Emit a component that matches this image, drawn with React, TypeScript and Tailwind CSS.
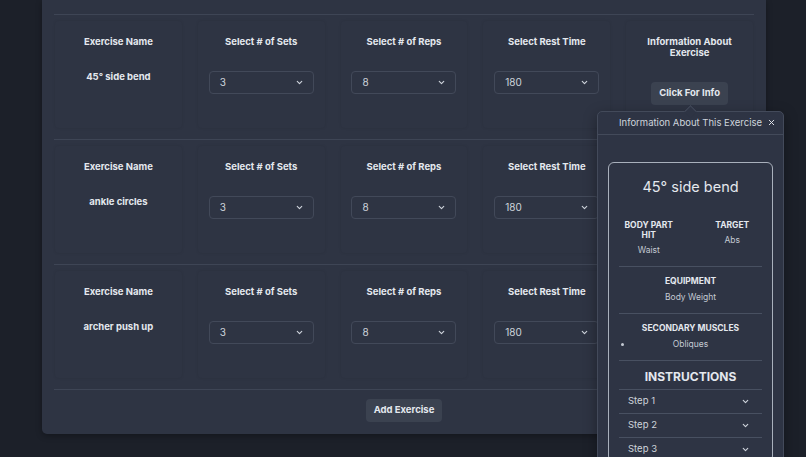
import { ChevronDown, X } from "lucide-react";

const rows = [
  { name: "45° side bend", sets: "3", reps: "8", rest: "180" },
  { name: "ankle circles", sets: "3", reps: "8", rest: "180" },
  { name: "archer push up", sets: "3", reps: "8", rest: "180" },
];

function Label({ children }: { children: React.ReactNode }) {
  return <div className="text-[9.5px] font-bold leading-[11px] text-[#e4e8ee]">{children}</div>;
}

function Select({ value }: { value: string }) {
  return (
    <div className="mx-auto flex h-[23px] w-[105px] items-center justify-between rounded-[4px] border border-[#424959] pl-[10px] pr-[9px] text-[10px] text-[#cfd4dc]">
      <span>{value}</span>
      <ChevronDown size={9} strokeWidth={3} className="text-[#cfd4dc]" />
    </div>
  );
}

function Cell({ label, children }: { label: React.ReactNode; children: React.ReactNode }) {
  return (
    <div className="h-[107px] rounded-[4px] pt-[15px] text-center shadow-[0_0_3px_rgba(0,0,0,0.1)]">
      <Label>{label}</Label>
      <div className="mt-[24px]">{children}</div>
    </div>
  );
}

function ExerciseRow({ row }: { row: (typeof rows)[number] }) {
  return (
    <div className="border-t border-[#3e4555] pb-[11px] pt-[6px]">
      <div className="grid grid-cols-5 gap-4 px-px">
        <Cell label="Exercise Name">
          <div className="text-[9.5px] font-bold leading-[12px] text-[#e4e8ee]">{row.name}</div>
        </Cell>
        <Cell label="Select # of Sets">
          <Select value={row.sets} />
        </Cell>
        <Cell label="Select # of Reps">
          <Select value={row.reps} />
        </Cell>
        <Cell label="Select Rest Time">
          <Select value={row.rest} />
        </Cell>
        <Cell label={<span className="mx-auto block w-[100px]">Information About Exercise</span>}>
          <div className="-mt-[4px]">
            <button className="h-[23px] w-[77px] rounded-[4px] bg-[#3b4250] text-[9.5px] font-bold text-[#e4e8ee]">
              Click For Info
            </button>
          </div>
        </Cell>
      </div>
    </div>
  );
}

function Section({ title, children }: { title: string; children: React.ReactNode }) {
  return (
    <div className="border-b border-[#485061] pb-[10px] pt-[9px] text-center">
      <div className="text-[8.5px] font-bold uppercase leading-[11px] text-[#e4e8ee]">{title}</div>
      <div className="mt-[5px] text-[8.5px] leading-[11px] text-[#c4cad3]">{children}</div>
    </div>
  );
}

function InfoPopover() {
  return (
    <div className="absolute left-[597px] top-[111px] h-[360px] w-[187px] rounded-t-[5px] border border-[#434a5a] bg-[#2e3444] shadow-[0_4px_14px_rgba(0,0,0,0.35)]">
      <div className="absolute -top-[5px] left-[88px] h-[9px] w-[9px] rotate-45 border-l border-t border-[#434a5a] bg-[#2e3444]" />
      <div className="relative flex h-[23px] items-center justify-center border-b border-[#434a5a] text-[9.5px] text-[#cfd4dc]">
        Information About This Exercise
        <X size={9} strokeWidth={2.5} className="absolute right-[7px] top-[6px] text-[#e4e8ee]" />
      </div>
      <div className="px-[10px] pt-[27px]">
        <div className="rounded-[6px] border-[1.5px] border-[#a9b0bc] px-[10px] pt-[14px]">
          <div className="text-center text-[14.5px] leading-[20px] text-[#e4e8ee]">45° side bend</div>
          <div className="mt-[23px] grid grid-cols-2 gap-6 border-b border-[#485061] pb-[10px] text-center">
            <div>
              <div className="text-[8.5px] font-bold uppercase leading-[10px] text-[#e4e8ee]">Body Part Hit</div>
              <div className="mt-[5px] text-[8.5px] leading-[11px] text-[#c4cad3]">Waist</div>
            </div>
            <div>
              <div className="text-[8.5px] font-bold uppercase leading-[10px] text-[#e4e8ee]">Target</div>
              <div className="mt-[5px] text-[8.5px] leading-[11px] text-[#c4cad3]">Abs</div>
            </div>
          </div>
          <Section title="Equipment">Body Weight</Section>
          <Section title="Secondary Muscles">
            <div className="relative">
              <span className="absolute left-[2px] top-[4px] h-[3px] w-[3px] rounded-full bg-[#c4cad3]" />
              Obliques
            </div>
          </Section>
          <div className="pb-[5px] pt-[9px] text-center text-[12px] font-bold leading-[14px] text-[#e4e8ee]">
            INSTRUCTIONS
          </div>
          {["Step 1", "Step 2", "Step 3"].map((s) => (
            <div
              key={s}
              className="flex h-[24px] items-center justify-between border-t border-[#485061] pl-[9px] pr-[12px] text-[9.5px] text-[#cfd4dc]"
            >
              <span>{s}</span>
              <ChevronDown size={9} strokeWidth={3} />
            </div>
          ))}
        </div>
      </div>
    </div>
  );
}

export default function App() {
  return (
    <div className="relative h-[457px] w-[806px] overflow-hidden bg-[#1c2029] font-[Inter,sans-serif]">
      <div className="ml-[42px] w-[724px] rounded-b-[5px] bg-[#2e3443] px-3 shadow-[0_2px_6px_rgba(0,0,0,0.3)]">
        <div className="h-[14px]" />
        {rows.map((r) => (
          <ExerciseRow key={r.name} row={r} />
        ))}
        <div className="flex justify-center border-t border-[#3e4555] pb-[12px] pt-[9px]">
          <button className="h-[23px] w-[76px] rounded-[4px] bg-[#3b4250] text-[9.5px] font-bold text-[#e4e8ee]">
            Add Exercise
          </button>
        </div>
      </div>
      <InfoPopover />
    </div>
  );
}
